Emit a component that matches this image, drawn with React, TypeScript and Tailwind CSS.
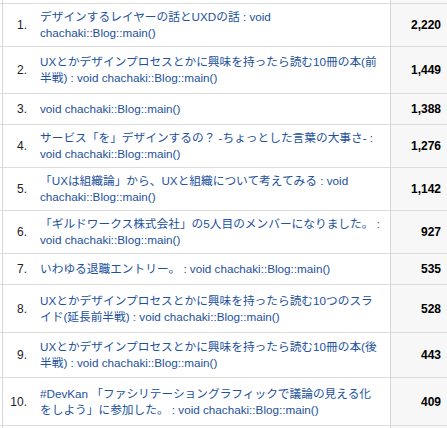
import React from 'react';

interface PageRow {
    rank: number;
    lines: string[];
    views: string;
    height: string;
}

const rows: PageRow[] = [
    { rank: 1, lines: ['デザインするレイヤーの話とUXDの話 : void', 'chachaki::Blog::main()'], views: '2,220', height: 'h-[43px]' },
    { rank: 2, lines: ['UXとかデザインプロセスとかに興味を持ったら読む10冊の本(前', '半戦) : void chachaki::Blog::main()'], views: '1,449', height: 'h-[47px]' },
    { rank: 3, lines: ['void chachaki::Blog::main()'], views: '1,388', height: 'h-[31px]' },
    { rank: 4, lines: ['サービス「を」デザインするの？ -ちょっとした言葉の大事さ- :', 'void chachaki::Blog::main()'], views: '1,276', height: 'h-[43px]' },
    { rank: 5, lines: ['「UXは組織論」から、UXと組織について考えてみる : void', 'chachaki::Blog::main()'], views: '1,142', height: 'h-[43px]' },
    { rank: 6, lines: ['「ギルドワークス株式会社」の5人目のメンバーになりました。 :', 'void chachaki::Blog::main()'], views: '927', height: 'h-[43px]' },
    { rank: 7, lines: ['いわゆる退職エントリー。 : void chachaki::Blog::main()'], views: '535', height: 'h-[31px]' },
    { rank: 8, lines: ['UXとかデザインプロセスとかに興味を持ったら読む10つのスラ', 'イド(延長前半戦) : void chachaki::Blog::main()'], views: '528', height: 'h-[48px]' },
    { rank: 9, lines: ['UXとかデザインプロセスとかに興味を持ったら読む10冊の本(後', '半戦) : void chachaki::Blog::main()'], views: '443', height: 'h-[45px]' },
    { rank: 10, lines: ['#DevKan 「ファシリテーショングラフィックで議論の見える化', 'をしよう」に参加した。 : void chachaki::Blog::main()'], views: '409', height: 'h-[48px]' },
];

// cropped table edges: a sliver of the column on the left and the rows above/below
function EdgeRow({ height }: { height: string }) {
    return (
        <div className={`flex ${height}`}>
            <div className="w-[3px] shrink-0 border-r border-[#d6d6d6]" />
            <div className="w-[387px] shrink-0" />
            <div className="flex-1 border-l border-[#d6d6d6] bg-[#f7f7f7]" />
        </div>
    );
}

function App() {
    return (
        <div
            className="w-[447px] h-[428px] overflow-hidden bg-white text-[11.7px]"
            style={{ fontFamily: '"Liberation Sans", "Noto Sans CJK JP", sans-serif' }}
        >
            <div className="border-b border-[#dcdcdc]">
                <EdgeRow height="h-[3px]" />
            </div>
            {rows.map((row) => (
                <div key={row.rank} className={`flex ${row.height} box-border border-b border-[#dcdcdc]`}>
                    <div className="w-[3px] shrink-0 border-r border-[#d6d6d6]" />
                    <div className="w-[24px] shrink-0 flex items-center justify-end text-[12px] text-[#222]">
                        {row.rank}.
                    </div>
                    <div className="w-[363px] shrink-0 pl-[13px] flex flex-col justify-center leading-[16px] text-[#22519c] whitespace-nowrap overflow-hidden">
                        {row.lines.map((line, i) => (
                            <span key={i}>{line}</span>
                        ))}
                    </div>
                    <div className="flex-1 border-l border-[#d6d6d6] bg-[#f7f7f7] flex items-center justify-end pr-[6px] text-[12px] font-bold text-black">
                        {row.views}
                    </div>
                </div>
            ))}
            <EdgeRow height="h-[10px]" />
        </div>
    );
}

export default App;
